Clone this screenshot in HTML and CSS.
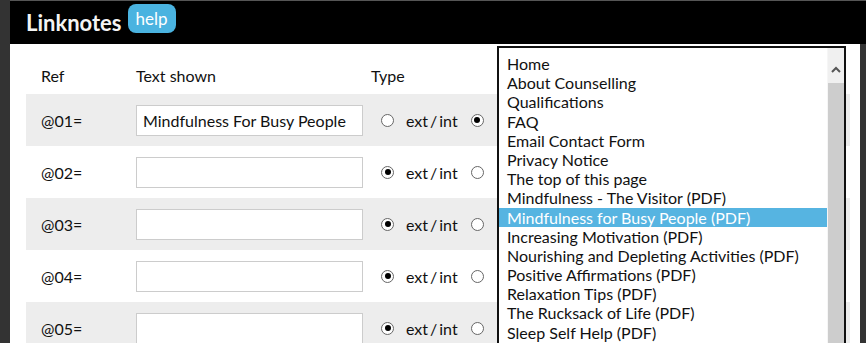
FILE: index.html
```html
<!DOCTYPE html>
<html lang="en">
<head>
    <meta charset="UTF-8">
    <title>Linknotes</title>
    <link rel="stylesheet" href="styles.css">
</head>
<body>
    <div class="modal">
        <div class="modal-head">
            <h1>Linknotes</h1>
            <span class="help">help</span>
        </div>

        <div class="notes">
            <div class="row head">
                <div>Ref</div>
                <div>Text shown</div>
                <div>Type</div>
            </div>
            <div class="row">
                <div class="ref">@01=</div>
                <div><input type="text" value="Mindfulness For Busy People"></div>
                <div class="type"><input type="radio" name="t1"><span>ext&thinsp;/&thinsp;int</span><input type="radio" name="t1" checked></div>
            </div>
            <div class="row">
                <div class="ref">@02=</div>
                <div><input type="text"></div>
                <div class="type"><input type="radio" name="t2" checked><span>ext&thinsp;/&thinsp;int</span><input type="radio" name="t2"></div>
            </div>
            <div class="row">
                <div class="ref">@03=</div>
                <div><input type="text"></div>
                <div class="type"><input type="radio" name="t3" checked><span>ext&thinsp;/&thinsp;int</span><input type="radio" name="t3"></div>
            </div>
            <div class="row">
                <div class="ref">@04=</div>
                <div><input type="text"></div>
                <div class="type"><input type="radio" name="t4" checked><span>ext&thinsp;/&thinsp;int</span><input type="radio" name="t4"></div>
            </div>
            <div class="row">
                <div class="ref">@05=</div>
                <div><input type="text"></div>
                <div class="type"><input type="radio" name="t5" checked><span>ext&thinsp;/&thinsp;int</span><input type="radio" name="t5"></div>
            </div>
        </div>

        <!-- page picker opened over the table -->
        <div class="picker">
            <ul>
                <li>Home</li>
                <li>About Counselling</li>
                <li>Qualifications</li>
                <li>FAQ</li>
                <li>Email Contact Form</li>
                <li>Privacy Notice</li>
                <li>The top of this page</li>
                <li>Mindfulness - The Visitor (PDF)</li>
                <li class="selected">Mindfulness for Busy People (PDF)</li>
                <li>Increasing Motivation (PDF)</li>
                <li>Nourishing and Depleting Activities (PDF)</li>
                <li>Positive Affirmations (PDF)</li>
                <li>Relaxation Tips (PDF)</li>
                <li>The Rucksack of Life (PDF)</li>
                <li>Sleep Self Help (PDF)</li>
            </ul>
            <div class="scrollbar">
                <svg class="arrow" width="10" height="7" viewBox="0 0 10 7"><path d="M1 6 L5 2 L9 6" fill="none" stroke="#555" stroke-width="2"/></svg>
                <div class="thumb"></div>
            </div>
        </div>
    </div>
</body>
</html>
```

FILE: styles.css
```css
body {
    margin: 0;
    height: 343px;
    overflow: hidden;
    background-color: #333;
    font-family: Lato, "Open Sans", sans-serif;
    color: #111;
}
.modal {
    position: relative;
    margin-left: 10px;
    width: 850px;
    height: 343px;
    background-color: white;
}
.modal-head {
    display: flex;
    align-items: center;
    gap: 6px;
    height: 40px;
    padding: 3px 0 0 16px;
    margin-right: -6px;
    background-color: #000;
    border-top: 1px solid #555;
}
.modal-head h1 {
    margin: 0;
    margin-top: -4px;
    font-size: 22px;
    font-weight: bold;
    color: #f4f4f4;
}
.help {
    margin-top: -11px;
    padding: 4px 8px;
    line-height: 21px;
    font-size: 17px;
    color: white;
    background-color: #4ab3e0;
    border-radius: 8px;
}
.notes {
    padding: 12px 0 0 16px;
    font-size: 16px;
}
.row {
    display: grid;
    grid-template-columns: 110px 235px 1fr;
    align-items: center;
    height: 52px;
    margin-right: 10px;
}
.row.head {
    height: 38px;
}
.row > div:first-child {
    padding-left: 15px;
}
.row:nth-child(even) {
    background-color: #ededed;
}
.row input[type="text"] {
    box-sizing: border-box;
    width: 227px;
    height: 31px;
    padding: 0 6px;
    border: 1px solid #ccc;
    font-family: Lato, sans-serif;
    font-size: 16px;
    color: #111;
    background-color: white;
}
.type {
    display: flex;
    align-items: center;
}
.type input[type="radio"] {
    appearance: none;
    -webkit-appearance: none;
    position: relative;
    width: 13px;
    height: 13px;
    margin: 0 0 0 10px;
    border: 1px solid #666;
    border-radius: 50%;
    background-color: white;
}
.type input[type="radio"]:checked::after {
    content: "";
    position: absolute;
    left: 2.5px;
    top: 2.5px;
    width: 6px;
    height: 6px;
    border-radius: 50%;
    background-color: #000;
}
.type span {
    margin: 0 3px 0 12px;
}
.picker {
    position: absolute;
    left: 487px;
    top: 46px;
    width: 345px;
    height: 310px;
    overflow: hidden;
    border: 2px solid #111;
    background-color: white;
    font-size: 16px;
}
.picker ul {
    list-style: none;
    margin: 0;
    padding: 6px 17px 0 0;
}
.picker li {
    height: 19.2px;
    line-height: 19.2px;
    padding-left: 8px;
    white-space: nowrap;
}
.picker li.selected {
    background-color: #56b4e1;
    color: white;
}
.scrollbar {
    position: absolute;
    top: 0;
    right: 0;
    bottom: 0;
    width: 16px;
    background-color: #f0f0f0;
    border-left: 1px solid #f6f6f6;
}
.arrow {
    position: absolute;
    left: 3px;
    top: 18px;
}
.thumb {
    position: absolute;
    top: 35px;
    left: 0;
    right: 0;
    bottom: 0;
    background-color: #cdcdcd;
}
```
